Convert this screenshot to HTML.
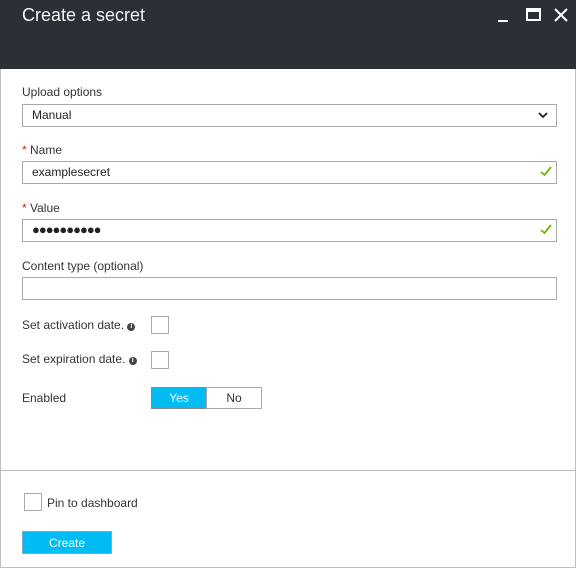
<!DOCTYPE html>
<html><head><meta charset="utf-8"><style>
*{box-sizing:border-box;margin:0;padding:0}
body{width:576px;height:568px;background:#fff;font-family:"Liberation Sans",sans-serif;font-size:12px;color:#333;position:relative;overflow:hidden}
.hdr{position:absolute;left:0;top:0;width:576px;height:69px;background:#2b3036}
.title{position:absolute;left:22px;top:5px;color:#f4f4f4;font-size:18px}
.frame{position:absolute;left:0;top:69px;width:576px;height:499px;border:1px solid #bdbdbd;border-top:none}
.abs{position:absolute}
.inp{position:absolute;left:22px;width:535px;height:23px;border:1px solid #aaa;background:#fff;padding:3px 9px;font-size:12px;color:#222}
.chk{position:absolute;width:18px;height:18px;border:1px solid #aaa;background:#fff}
.star{color:#e81123}
.ok{position:absolute;right:4px;top:3px}
.info{display:inline-block;width:8px;height:8px;border-radius:50%;background:#444;color:#fff;font-size:7px;line-height:8px;text-align:center;font-weight:bold;vertical-align:1px}
</style></head><body>
<div class="hdr">
<div class="title">Create a secret</div>
<div class="abs" style="left:498px;top:20px;width:10px;height:2px;background:#fff"></div>
<div class="abs" style="left:526px;top:8px;width:15px;height:13px;border:2px solid #fff;border-top-width:4px"></div>
<svg class="abs" style="left:554px;top:8px" width="14" height="14"><path d="M1 1L13 13M13 1L1 13" stroke="#fff" stroke-width="2"/></svg>
</div>
<div class="frame"></div>
<div class="abs" style="left:22px;top:85px">Upload options</div>
<div class="inp" style="top:104px;height:23px">Manual
<svg class="abs" style="right:8px;top:7px" width="10" height="7"><path d="M1 1L5 5L9 1" stroke="#222" stroke-width="1.8" fill="none"/></svg></div>
<div class="abs" style="left:22px;top:143px"><span class="star">*</span> Name</div>
<div class="inp" style="top:161px">examplesecret<svg class="ok" width="12" height="12"><path d="M1 7L4.5 10L11 2" stroke="#6bb700" stroke-width="1.8" fill="none"/></svg></div>
<div class="abs" style="left:22px;top:201px"><span class="star">*</span> Value</div>
<div class="inp" style="top:219px;letter-spacing:-1px;font-size:13px;padding-top:2px">●●●●●●●●●●<svg class="ok" width="12" height="12"><path d="M1 7L4.5 10L11 2" stroke="#6bb700" stroke-width="1.8" fill="none"/></svg></div>
<div class="abs" style="left:22px;top:259px">Content type (optional)</div>
<div class="inp" style="top:277px"></div>
<div class="abs" style="left:22px;top:318px">Set activation date. <span class="info">i</span></div>
<div class="chk" style="left:151px;top:316px"></div>
<div class="abs" style="left:22px;top:352px">Set expiration date. <span class="info">i</span></div>
<div class="chk" style="left:151px;top:351px"></div>
<div class="abs" style="left:22px;top:391px">Enabled</div>
<div class="abs" style="left:151px;top:387px;width:56px;height:22px;background:#00bcf2;border:1px solid #888;color:#fff;text-align:center;line-height:20px">Yes</div>
<div class="abs" style="left:206px;top:387px;width:56px;height:22px;background:#fff;border:1px solid #aaa;text-align:center;line-height:20px">No</div>
<div class="abs" style="left:1px;top:470px;width:574px;height:1px;background:#bdbdbd"></div>
<div class="chk" style="left:24px;top:493px"></div>
<div class="abs" style="left:47px;top:496px">Pin to dashboard</div>
<div class="abs" style="left:22px;top:531px;width:90px;height:23px;background:#00bcf2;border:1px solid #7ac;color:#fff;text-align:center;line-height:23px">Create</div>
</body></html>
